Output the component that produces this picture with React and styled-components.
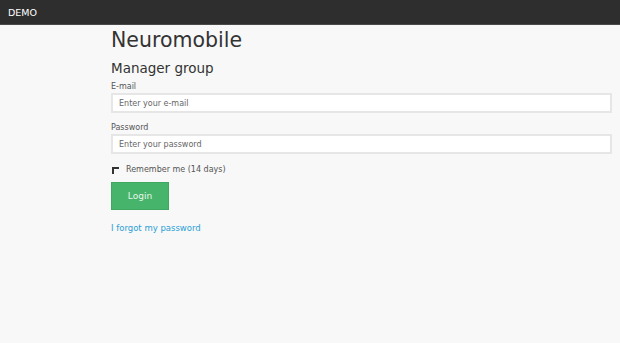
import styled, { createGlobalStyle } from "styled-components";

const Global = createGlobalStyle`
  html, body {
    margin: 0;
    padding: 0;
    background: #f8f8f8;
    font-family: "DejaVu Sans", Verdana, sans-serif;
    color: #333;
  }
  * { box-sizing: border-box; }
`

const Topbar = styled.div`
  height: 25px;
  background: #2e2e2e;
  border-bottom: 1px solid #4a4a4a;
  display: flex;
  align-items: center;
  padding-left: 8px;
  color: #fff;
  font-size: 9.5px;
`

const Main = styled.div`
  padding: 3px 8px 0 111px;
  display: flex;
  flex-direction: column;
`

const Title = styled.h1`
  margin: 0;
  font-size: 20.5px;
  font-weight: 400;
  line-height: 24px;
  color: #333;
`

const Subtitle = styled.h2`
  margin: 8px 0 0;
  font-size: 13.5px;
  font-weight: 400;
  line-height: 16px;
  color: #333;
`

const Field = styled.div`
  display: flex;
  flex-direction: column;
  margin-top: ${p => p.$top}px;
`

const Label = styled.label`
  font-size: 8px;
  line-height: 10px;
  color: #555;
  margin-bottom: 1px;
`

const Input = styled.input`
  height: 20px;
  width: 100%;
  border: 2px solid #e6e6e6;
  background: #fff;
  padding: 0 6px;
  font-family: inherit;
  font-size: 8px;
  color: #333;
  outline: none;
  &::placeholder { color: #666; }
`

const Check = styled.label`
  display: flex;
  align-items: center;
  gap: 7px;
  margin-top: 10px;
  font-size: 8px;
  line-height: 12px;
  color: #555;
`

const Box = styled.span`
  width: 7px;
  height: 7px;
  border-top: 2px solid #333;
  border-left: 2px solid #333;
  margin-left: 1px;
`

const Button = styled.button`
  margin-top: 6px;
  width: 58px;
  height: 28px;
  background: #47b46b;
  border: 1px solid #3fa762;
  color: #e8f6ec;
  font-family: inherit;
  font-size: 9px;
  padding: 0;
`

const Forgot = styled.a`
  margin-top: 12px;
  font-size: 8.5px;
  line-height: 12px;
  color: #2a9fd6;
  text-decoration: none;
`

export default function App() {
  return (
    <>
      <Global />
      <Topbar>DEMO</Topbar>
      <Main>
        <Title>Neuromobile</Title>
        <Subtitle>Manager group</Subtitle>
        <Field $top={6}>
          <Label>E-mail</Label>
          <Input placeholder="Enter your e-mail" />
        </Field>
        <Field $top={10}>
          <Label>Password</Label>
          <Input type="password" placeholder="Enter your password" />
        </Field>
        <Check><Box />Remember me (14 days)</Check>
        <div><Button>Login</Button></div>
        <Forgot href="#">I forgot my password</Forgot>
      </Main>
    </>
  );
}
